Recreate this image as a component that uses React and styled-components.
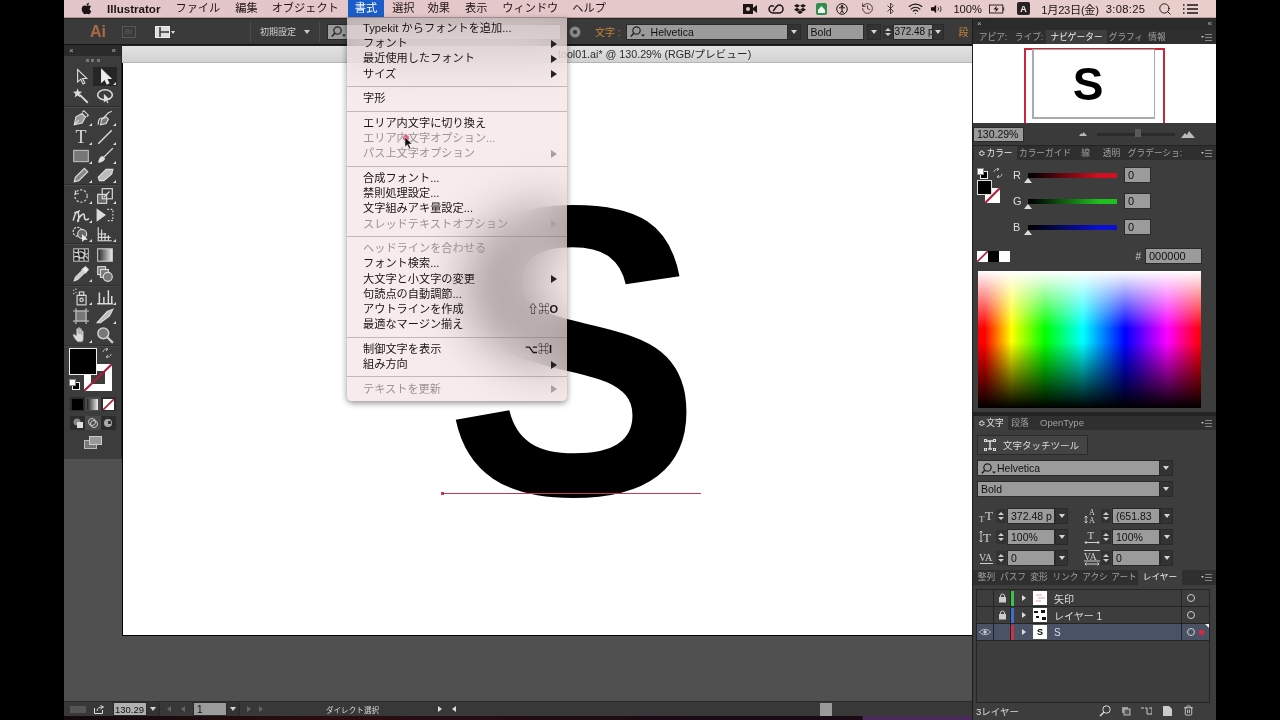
import React from 'react';
import styled, { createGlobalStyle } from 'styled-components';
import { FaApple, FaDropbox } from 'react-icons/fa';
import { Bluetooth, History, Search, Trash2, Wifi } from 'lucide-react';

const UI_FONT = '"Liberation Sans", "Noto Sans CJK JP", sans-serif';

const GlobalStyle = createGlobalStyle`
  html, body { margin: 0; padding: 0; background: #000; height: 720px; overflow: hidden; }
  * { box-sizing: border-box; }
`;

const Screen = styled.div`
  position: relative;
  width: 1152px;
  height: 720px;
  margin-left: 64px;
  display: flex;
  flex-direction: column;
  overflow: hidden;
  font-family: ${UI_FONT};
`;

const Gapped = styled.svg`
  flex: none;
  margin-left: ${(p) => p.$l || 0}px;
  margin-right: ${(p) => p.$r || 0}px;
`;

/* ---------- mac menu bar ---------- */
const MenuBar = styled.div`
  height: 18px;
  flex: none;
  display: flex;
  align-items: center;
  background: linear-gradient(90deg, #e2c5c8, #e5c8ca 50%, #e8cfcc);
  border-bottom: 1px solid #b79a9c;
  color: #1c1414;
  font-size: 11.2px;
  position: relative;
`;
const AppleMark = styled.span`
  display: flex;
  margin-left: 16px;
  width: 20px;
  font-size: 13px;
`;
const MenuName = styled.span`
  padding: 0 7px;
  margin-right: ${(p) => p.$gap || 0}px;
  height: 17px;
  line-height: 17px;
  font-weight: ${(p) => (p.$bold ? 700 : 400)};
  font-size: ${(p) => (p.$bold ? '11.6px' : '11.2px')};
  background: ${(p) => (p.$open ? '#1b5dc8' : 'transparent')};
  color: ${(p) => (p.$open ? '#fff' : 'inherit')};
`;
const StatusArea = styled.div`
  margin-left: auto;
  display: flex;
  align-items: center;
  height: 17px;
  padding-right: 15px;
`;
const StatusSlot = styled.span`
  display: flex;
  justify-content: ${(p) => (p.$end ? 'flex-end' : 'center')};
  align-items: center;
  width: ${(p) => p.$w}px;
  padding-right: ${(p) => (p.$end ? 5 : 0)}px;
  white-space: nowrap;
  letter-spacing: ${(p) => p.$ls || 0}px;
`;
const InputBadge = styled.span`
  width: 13px;
  height: 13px;
  background: #2a2024;
  color: #eee;
  font-size: 9px;
  font-weight: 700;
  border-radius: 2px;
  display: flex;
  align-items: center;
  justify-content: center;
`;

/* ---------- app frame ---------- */
const Workspace = styled.div`
  flex: 1;
  display: flex;
  min-height: 0;
`;
const MainColumn = styled.div`
  flex: 1;
  min-width: 0;
  display: flex;
  flex-direction: column;
`;

/* ---------- control bar ---------- */
const ControlBar = styled.div`
  height: 27px;
  flex: none;
  display: flex;
  align-items: center;
  background: #3a3a3a;
  border-bottom: 1px solid #151515;
  border-top: 1px solid #262626;
  color: #cfcfcf;
  font-size: 9px;
  white-space: nowrap;
  overflow: hidden;
`;
const AppLogo = styled.span`
  color: #a96a45;
  font-weight: 700;
  font-size: 16px;
  margin-left: 26px;
  width: 32px;
`;
const BridgeBox = styled.span`
  width: 14px;
  height: 12px;
  border: 1px solid #565656;
  color: #5f5f5f;
  font-size: 8px;
  line-height: 10px;
  text-align: center;
  margin-right: 19px;
`;
const BarDivider = styled.span`
  width: 1px;
  height: 20px;
  background: #4c4c4c;
  margin: 0 ${(p) => p.$r || 0}px 0 ${(p) => p.$l || 0}px;
`;
const OrangeLabel = styled.span`
  color: #c98538;
  font-size: 10px;
  margin: 0 ${(p) => p.$r || 0}px 0 ${(p) => p.$l || 0}px;
`;
const Field = styled.span`
  display: flex;
  align-items: center;
  flex: none;
  width: ${(p) => p.$w}px;
  height: ${(p) => p.$h || 14}px;
  background: ${(p) => p.$bg || '#9b9b9b'};
  color: #111;
  font-size: ${(p) => p.$size || 11}px;
  padding-left: ${(p) => (p.$tight ? 1 : 3)}px;
  margin-left: ${(p) => p.$l || 0}px;
  white-space: nowrap;
  overflow: hidden;
  box-shadow: 0 0 0 1px #2a2a2a;
`;
const DropButton = styled.span`
  flex: none;
  width: ${(p) => p.$w || 12}px;
  height: 14px;
  margin-left: ${(p) => (p.$l === undefined ? 1 : p.$l)}px;
  background: #333;
  box-shadow: 0 0 0 1px #2a2a2a;
  display: flex;
  align-items: center;
  justify-content: center;
  &::after {
    content: '';
    border-left: 3px solid transparent;
    border-right: 3px solid transparent;
    border-top: 4px solid #d5d5d5;
  }
`;
const Spinner = styled.span`
  flex: none;
  width: 10px;
  height: 14px;
  background: #333;
  display: flex;
  flex-direction: column;
  align-items: center;
  justify-content: center;
  gap: 2px;
  margin-left: ${(p) => p.$l || 0}px;
  &::before, &::after {
    content: '';
    border-left: 3px solid transparent;
    border-right: 3px solid transparent;
  }
  &::before { border-bottom: 3px solid #ccc; }
  &::after { border-top: 3px solid #ccc; }
`;

/* ---------- document area ---------- */
const DocBody = styled.div`
  flex: 1;
  min-height: 0;
  display: flex;
  background: #505050;
`;
const ToolColumn = styled.div`
  width: 58px;
  flex: none;
  align-self: flex-start;
  height: 414px;
  background: #3c3c3c;
  border-right: 1px solid #222;
  display: flex;
  flex-direction: column;
`;
const ToolHeader = styled.div`
  height: 11px;
  background: #2b2b2b;
  color: #bbb;
  font-size: 8px;
  line-height: 11px;
  display: flex;
  justify-content: space-between;
  padding: 0 5px;
`;
const Grip = styled.div`
  height: 7px;
  margin: 3px auto 0;
  width: 14px;
  border-top: 3px dotted #777;
`;
const ToolGroup = styled.div`
  display: grid;
  grid-template-columns: 24px 24px;
  justify-content: center;
  grid-auto-rows: 19px;
  padding: 1px 0 ${(p) => p.$pad}px;
  border-bottom: 1px solid #2f2f2f;
  box-shadow: 0 1px 0 #484848;
`;
const ToolButton = styled.span`
  position: relative;
  display: flex;
  align-items: center;
  justify-content: center;
  background: ${(p) => (p.$active ? '#262626' : 'transparent')};
  &::after {
    content: '';
    display: ${(p) => (p.$corner ? 'block' : 'none')};
    position: absolute;
    right: 1px;
    bottom: 1px;
    border-left: 3px solid transparent;
    border-bottom: 3px solid #ddd;
  }
`;
const ColorBlock = styled.div`
  position: relative;
  height: 44px;
  margin-top: 2px;
  flex: none;
`;
const FillBox = styled.span`
  position: absolute;
  left: 5px;
  top: 0;
  width: 28px;
  height: 27px;
  background: #000;
  border: 1px solid #eee;
  z-index: 1;
`;
const StrokeBox = styled.span`
  position: absolute;
  left: 20px;
  top: 16px;
  width: 28px;
  height: 27px;
`;
const SwapMark = styled.span`
  position: absolute;
  left: ${(p) => p.$l}px;
  top: ${(p) => p.$t}px;
  display: flex;
`;
const DefaultMark = styled.span`
  position: absolute;
  left: ${(p) => p.$l}px;
  top: ${(p) => p.$t}px;
  display: flex;
`;
const ModeRow = styled.div`
  display: flex;
  width: 46px;
  height: 14px;
  margin: 5px 0 0 6px;
  background: #2c2c2c;
  flex: none;
`;
const ModeCell = styled.span`
  flex: 1;
  display: flex;
  align-items: center;
  justify-content: center;
  background: ${(p) => (p.$on ? '#4a4a4a' : 'transparent')};
`;
const ScreenMode = styled.div`
  display: flex;
  justify-content: center;
  margin-top: 6px;
`;

const CanvasColumn = styled.div`
  flex: 1;
  min-width: 0;
  display: flex;
  flex-direction: column;
`;
const DocTab = styled.div`
  height: 18px;
  flex: none;
  background: linear-gradient(#e2e2e2, #d2d2d2);
  border-top: 1px solid #202020;
  border-bottom: 1px solid #b5b5b5;
  color: #2b2b2b;
  font-size: 10.7px;
  line-height: 16px;
  padding-left: 436px;
  white-space: nowrap;
  overflow: hidden;
`;
const Artboard = styled.div`
  position: relative;
  height: 573px;
  flex: none;
  background: #fff;
  border-bottom: 1px solid #000;
  border-left: 1px solid #000;
  overflow: hidden;
`;
const BigLetter = styled.span`
  position: absolute;
  left: 312px;
  top: 81px;
  font-family: "Liberation Sans", sans-serif;
  font-weight: 700;
  font-size: 414px;
  line-height: 1;
  color: #000;
  transform: scaleX(0.93);
`;
const BaseLine = styled.span`
  position: absolute;
  left: 318px;
  top: 430px;
  width: 260px;
  height: 1px;
  background: #c8384f;
  &::before {
    content: '';
    position: absolute;
    left: 0;
    top: -1px;
    width: 3px;
    height: 3px;
    background: #c8384f;
  }
`;

/* ---------- status bar ---------- */
const StatusBar = styled.div`
  height: 15px;
  flex: none;
  display: flex;
  align-items: center;
  background: #383838;
  border-top: 1px solid #2a2a2a;
  color: #d5d5d5;
  font-size: 7.6px;
  padding-left: 6px;
`;
const StatusLabel = styled.span`
  width: 165px;
  text-align: center;
  margin-left: 7px;
  flex: none;
`;
const Arrow = styled.span`
  flex: none;
  margin: 0 ${(p) => p.$r || 0}px 0 ${(p) => p.$l || 0}px;
  border-top: 3px solid transparent;
  border-bottom: 3px solid transparent;
  ${(p) => (p.$left
    ? `border-right: 4px solid ${p.$c || '#666'};`
    : `border-left: 4px solid ${p.$c || '#666'};`)}
`;
const ScrollThumb = styled.span`
  width: 12px;
  height: 13px;
  background: #9a9a9a;
  flex: none;
  margin-left: 364px;
`;
const Wallpaper = styled.div`
  height: 4px;
  flex: none;
  background: linear-gradient(90deg, #140a0c 0, #2a0d12 30%, #1a0a14 70%, #1a0a14 87.900%, #4a2a58 88%, #4a2a58 100%);
`;

/* ---------- dock ---------- */
const Dock = styled.div`
  width: 244px;
  flex: none;
  background: #3c3c3c;
  border-left: 1px solid #1c1c1c;
  display: flex;
  flex-direction: column;
`;
const DockHeader = styled.div`
  height: 12px;
  flex: none;
  background: #2b2b2b;
  color: #bbb;
  font-size: 8px;
  line-height: 12px;
  display: flex;
  justify-content: space-between;
  padding: 0 4px;
`;
const TabStrip = styled.div`
  height: ${(p) => p.$h || 14}px;
  flex: none;
  display: flex;
  align-items: stretch;
  background: #2f2f2f;
  padding-left: 1px;
  position: relative;
`;
const Tab = styled.span`
  flex: none;
  width: ${(p) => p.$w}px;
  overflow: hidden;
  white-space: nowrap;
  font-size: ${(p) => p.$size || 8.7}px;
  line-height: ${(p) => p.$lh || 14}px;
  text-align: center;
  color: ${(p) => (p.$active ? '#eee' : '#a0a0a0')};
  background: ${(p) => (p.$active ? '#3e3e3e' : 'transparent')};
`;
const TabMenu = styled.span`
  position: absolute;
  right: 4px;
  top: 4px;
  display: flex;
`;
const NavPreview = styled.div`
  height: 79px;
  flex: none;
  background: #fff;
  position: relative;
  overflow: hidden;
`;
const NavSheet = styled.span`
  position: absolute;
  left: 59px;
  top: 5px;
  width: 123px;
  height: 70px;
  border: 1px solid #aaa;
  border-width: 1px 1px 2px 2px;
  padding-right: 12px;
  text-align: center;
  font-family: "Liberation Sans", sans-serif;
  font-weight: 700;
  font-size: 46px;
  line-height: 68px;
  color: #000;
`;
const NavRect = styled.span`
  position: absolute;
  left: 51px;
  top: 4px;
  width: 141px;
  height: 90px;
  border: 2px solid #c8283c;
`;
const NavBar = styled.div`
  height: 23px;
  flex: none;
  display: flex;
  align-items: center;
  padding: 0 4px 0 1px;
  background: #3a3a3a;
  border-bottom: 1px solid #222;
`;
const NavTrack = styled.span`
  position: relative;
  width: 78px;
  height: 3px;
  margin: 0 6px 0 10px;
  background: #2b2b2b;
  &::after {
    content: '';
    position: absolute;
    left: 38px;
    top: -4px;
    width: 6px;
    height: 8px;
    background: #5a5a5a;
  }
`;
const ColorPanel = styled.div`
  height: 252px;
  flex: none;
  position: relative;
  display: flex;
  flex-direction: column;
  padding: 8px 15px 0 4px;
  background: #3d3d3d;
`;
const ColorTop = styled.div`
  display: flex;
  height: 78px;
`;
const MiniColor = styled.div`
  position: relative;
  width: 36px;
  flex: none;
`;
const MiniFill = styled.span`
  position: absolute;
  left: 0;
  top: 12px;
  width: 15px;
  height: 15px;
  background: #000;
  border: 1px solid #ddd;
  z-index: 1;
`;
const MiniStroke = styled.span`
  position: absolute;
  left: 8px;
  top: 20px;
  display: flex;
`;
const Sliders = styled.div`
  flex: 1;
  display: flex;
  flex-direction: column;
  gap: 12px;
`;
const SliderRow = styled.div`
  display: flex;
  align-items: center;
  height: 14px;
  color: #ddd;
  font-size: 11px;
`;
const ChannelName = styled.span`
  width: 15px;
  flex: none;
`;
const ChannelTrack = styled.span`
  position: relative;
  width: 89px;
  height: 5px;
  flex: none;
  background: linear-gradient(90deg, #000 3%, ${(p) => p.$c} 80%);
  &::after {
    content: '';
    position: absolute;
    left: -4px;
    top: 5px;
    border-left: 4px solid transparent;
    border-right: 4px solid transparent;
    border-bottom: 5px solid #ddd;
  }
`;
const SwatchRow = styled.div`
  display: flex;
  align-items: center;
  height: 14px;
  margin-top: 3px;
`;
const Swatch = styled.span`
  width: 11px;
  height: 11px;
  background: ${(p) => p.$c};
  display: flex;
`;
const HashMark = styled.span`
  margin-left: auto;
  color: #ccc;
  font-size: 10px;
  margin-right: 5px;
`;
const Spectrum = styled.div`
  width: 223px;
  height: 137px;
  margin: 8px 0 0 1px;
  background:
    linear-gradient(180deg, #fff 0%, rgba(255,255,255,0) 42%, rgba(0,0,0,0) 52%, #000 100%),
    linear-gradient(90deg, #f00 3%, #ff0 15%, #0f0 30%, #0ff 47%, #00f 66%, #f0f 85%, #f00 100%);
`;
const PanelGap = styled.div`
  height: 4px;
  flex: none;
  background: #222;
`;
const TypePanel = styled.div`
  height: 140px;
  flex: none;
  padding: 6px 0 0 5px;
  background: #3d3d3d;
  display: flex;
  flex-direction: column;
`;
const TouchButton = styled.span`
  width: 109px;
  height: 18px;
  display: flex;
  align-items: center;
  gap: 7px;
  padding-left: 6px;
  background: #444;
  box-shadow: 0 0 0 1px #2a2a2a;
  color: #ddd;
  font-size: 9.5px;
`;
const TypeRow = styled.div`
  display: flex;
  align-items: center;
  height: 14px;
  margin-top: ${(p) => p.$mt || 0}px;
`;
const MetricRow = styled.div`
  display: grid;
  grid-template-columns: 105px 1fr;
  height: 14px;
  margin-top: ${(p) => p.$mt || 7}px;
`;
const Metric = styled.div`
  display: flex;
  align-items: center;
`;
const MetricIcon = styled.span`
  width: 18px;
  flex: none;
  display: flex;
  justify-content: center;
`;
const LayersPanel = styled.div`
  flex: 1;
  display: flex;
  flex-direction: column;
  background: #3d3d3d;
  min-height: 0;
`;
const LayerList = styled.div`
  height: 114px;
  flex: none;
  margin: 4px 6px 0 3px;
  border: 1px solid #252525;
  background: #3d3d3d;
`;
const LayerRow = styled.div`
  position: relative;
  height: 17px;
  display: grid;
  grid-template-columns: 17px 17px 5px 17px 16px 1fr 28px;
  align-items: center;
  background: ${(p) => (p.$selected ? '#4a5366' : 'transparent')};
  border-bottom: 1px solid #252525;
  color: #ddd;
  font-size: 10px;
  &::after {
    content: '';
    display: ${(p) => (p.$selected ? 'block' : 'none')};
    position: absolute;
    right: 0;
    top: 0;
    border-left: 4px solid transparent;
    border-top: 4px solid #eee;
  }
`;
const EyeCell = styled.span`
  height: 16px;
  display: flex;
  align-items: center;
  justify-content: center;
  border-right: 1px solid #252525;
`;
const ColorBar = styled.span`
  height: 15px;
  width: 3px;
  background: ${(p) => p.$c};
`;
const Thumb = styled.span`
  display: flex;
  align-items: center;
  justify-content: center;
  width: 14px;
  height: 14px;
  background: #fff;
  color: #000;
  font-size: 9px;
  font-weight: 700;
  line-height: 14px;
  text-align: center;
  overflow: hidden;
`;
const LayerName = styled.span`
  padding-left: 5px;
`;
const TargetCell = styled.span`
  position: relative;
  height: 16px;
  display: flex;
  align-items: center;
  padding-left: 5px;
  gap: 4px;
  border-left: 1px solid #252525;
`;
const Target = styled.span`
  width: 8px;
  height: 8px;
  border-radius: 50%;
  border: 1px solid #ccc;
`;
const SelMark = styled.span`
  width: 5px;
  height: 5px;
  background: #d02a40;
`;
const LayerFoot = styled.div`
  height: 15px;
  display: flex;
  align-items: center;
  color: #ddd;
  font-size: 9.5px;
  padding-left: 3px;
`;
const FootSlot = styled.span`
  width: 21px;
  display: flex;
  justify-content: center;
  margin-left: ${(p) => p.$l || 0}px;
`;

/* ---------- dropdown menu ---------- */
const Menu = styled.div`
  position: absolute;
  left: 283px;
  top: 18px;
  width: 220px;
  height: 383px;
  padding-top: 3px;
  border-radius: 0 0 5px 5px;
  background: rgba(243, 225, 227, 0.68);
  backdrop-filter: blur(26px) saturate(1.1);
  box-shadow: 0 2px 6px rgba(0, 0, 0, 0.45);
  color: #1a1416;
  font-size: 11.2px;
  z-index: 5;
`;
const MenuRow = styled.div`
  height: 15.2px;
  line-height: 15.2px;
  display: flex;
  align-items: center;
  padding: 0 9px 0 16px;
  white-space: nowrap;
  color: ${(p) => (p.$off ? '#9b9295' : 'inherit')};
`;
const Shortcut = styled.span`
  margin-left: auto;
  padding-right: ${(p) => p.$pr}px;
  font-size: 11px;
  font-weight: 700;
  color: inherit;
`;
const SubArrow = styled.span`
  margin-left: auto;
  margin-right: 1px;
  border-top: 4px solid transparent;
  border-bottom: 4px solid transparent;
  border-left: 6px solid ${(p) => (p.$off ? '#a9a0a3' : '#222')};
`;
const MenuRule = styled.div`
  height: 1px;
  margin: 4.3px 0 4.2px;
  background: rgba(120, 105, 108, 0.4);
`;
const Pointer = styled.span`
  position: absolute;
  left: 339px;
  top: 134px;
  z-index: 6;
  display: flex;
`;

/* ---------- small drawings ---------- */
const paths = {
  select: <path d="M5 1.500v11l2.800-2.600 2 4.300 1.600-.8-2-4.100h3.700z" fill="none" stroke="#ddd" />,
  direct: <path d="M5 1.500v11l2.800-2.600 2 4.300 1.600-.8-2-4.100h3.700z" fill="#eee" stroke="#eee" />,
  wand: <g stroke="#ddd" fill="#ddd"><path d="M7 7l7 7" strokeWidth="1.600" /><path d="M5 1l1 3 3 .3-2.300 2 .8 3-2.600-1.700-2.600 1.700.8-3L1 4.300 4 4z" stroke="none" /></g>,
  lasso: <g fill="none" stroke="#ddd"><ellipse cx="8" cy="7" rx="6.500" ry="4.500" strokeWidth="1.400" /><path d="M7 6v8l2-2 1 2.500 1-.5-1-2.500h2.500z" fill="#ddd" stroke="none" /></g>,
  pen: <g fill="none" stroke="#ddd"><path d="M2 14l1.500-7 5.500-3 3 3-3 5.500z" fill="#999" /><path d="M2 14l4-4M9 3l1.500-1.500 4 4L13 7" /></g>,
  curve: <g fill="none" stroke="#ddd"><path d="M2 14c0-6 2-6 4-6s3-5 8-6" /><path d="M4 14l1-5 4-2 2 2-2 4z" fill="#777" /></g>,
  type: <text x="8" y="13.500" textAnchor="middle" fontFamily="Liberation Serif" fontSize="16" fill="#ddd">T</text>,
  line: <path d="M2 14L14 2" stroke="#ddd" strokeWidth="1.200" />,
  rect: <rect x="1.500" y="3" width="13" height="10" fill="#777" stroke="#bbb" />,
  brush: <g stroke="#ddd" fill="#ddd"><path d="M7 9L15 1" strokeWidth="1.200" /><path d="M2 14c0-3 2-6 4-6l2 2c0 2-3 4-6 4z" stroke="none" /></g>,
  pencil: <path d="M2 14l1-4 8-8 3 3-8 8z" fill="#888" stroke="#ddd" />,
  eraser: <path d="M2 10l7-7h6l-1 4-7 6H3z" fill="#bbb" stroke="#ddd" />,
  rotate: <g fill="none" stroke="#ddd"><circle cx="8" cy="8" r="5.500" strokeDasharray="2 1.500" /><path d="M3 3v3h3" /></g>,
  scale: <g fill="none" stroke="#ddd"><rect x="1.500" y="6.500" width="8" height="8" fill="#666" /><rect x="5.500" y="1.500" width="9" height="9" /><path d="M7 9l5-5" /></g>,
  warp: <g fill="none" stroke="#ddd" strokeWidth="1.300"><path d="M1 13c3-11 5-9 5-3s-2 4 0 1 5-6 5-2 2 4 4 2" /><path d="M2 6c2 0 3 0 5-2" /></g>,
  free: <g fill="#ddd" stroke="#ddd"><path d="M1 3l7 5-7 5z" /><path d="M10 3h5v10h-5" fill="none" strokeDasharray="1.500 1.500" /></g>,
  shape: <g fill="none" stroke="#ddd"><circle cx="5" cy="6" r="4" strokeDasharray="2 1" /><circle cx="9" cy="8" r="4" fill="#666" /><path d="M9 8v7l2-2h3z" fill="#eee" stroke="none" /></g>,
  graph: <g stroke="#ddd" fill="none"><path d="M2 2v12h12" /><path d="M5 4v10M8 7v7M11 9v5M2 8h7M2 11h11" /></g>,
  mesh: <g><rect x="1.500" y="2.500" width="13" height="11" fill="#222" stroke="#bbb" /><path d="M2 5c3 3 5-2 8 1s3 0 4 1M2 10c3-3 5 3 8 0s3 1 4 1M6 3c-2 3 2 6 0 10M11 3c2 3-2 6 0 10" stroke="#ddd" fill="none" /></g>,
  gradient: <g><defs><linearGradient id="toolGrad"><stop offset="0" stopColor="#222" /><stop offset="1" stopColor="#eee" /></linearGradient></defs><rect x="1.500" y="2.500" width="13" height="11" fill="url(#toolGrad)" stroke="#ccc" /></g>,
  dropper: <g stroke="#ddd" fill="#ccc"><path d="M2 14l1-3 6-6 2 2-6 6z" /><path d="M9 4l3-2.500 2.500 2.500L12 7z" fill="#eee" /></g>,
  blend: <g fill="#777" stroke="#ddd"><rect x="1.500" y="1.500" width="7" height="7" /><rect x="4" y="4" width="7" height="7" /><circle cx="10.500" cy="10.500" r="4" /></g>,
  spray: <g stroke="#ddd" fill="none"><rect x="4.500" y="6.500" width="8" height="8.500" fill="#444" /><rect x="6.500" y="3.500" width="4" height="3" /><circle cx="8.500" cy="10.500" r="1.500" /><path d="M1 2h1M3 4h1M1 5h1M3 1h1" /></g>,
  bars: <g fill="none" stroke="#ddd" strokeWidth="1.300"><path d="M1 14h14M3 14V4M7 14V8M11 14V2M14 14V7" /></g>,
  artboard: <g fill="#777" stroke="#ccc"><rect x="3.500" y="3.500" width="9" height="9" /><path d="M1 3.500h2M13 3.500h2M1 12.500h2M13 12.500h2M3.500 1v2M12.500 1v2M3.500 13v2M12.500 13v2" /></g>,
  slice: <path d="M1 14L10 4l5-2-3 6-8 6z" fill="#bbb" stroke="#ddd" />,
  hand: <path d="M5 14c-2-2-4-5-4-6s1-1 2 0l1 1V3c0-1 1.500-1 1.500 0v4V2c0-1 1.500-1 1.500 0v5V3c0-1 1.500-1 1.500 0v5-3c0-1 1.500-1 1.500 0v6c0 2-1 3-1 3z" fill="#ddd" stroke="#999" strokeWidth=".5" />,
  zoom: <g fill="none" stroke="#ccc"><circle cx="6.500" cy="6.500" r="4.800" fill="#777" strokeWidth="1.400" /><path d="M10 10l5 5" strokeWidth="2" /></g>,
};

const ToolIcon = ({ name }) => (
  <svg width="18" height="18" viewBox="0 0 16 16">{paths[name]}</svg>
);

const toolGroups = [
  { pad: 1, items: [['select', 0], ['direct', 1], ['wand', 0], ['lasso', 0]] },
  { pad: 0, items: [['pen', 1], ['curve', 1], ['type', 1], ['line', 1], ['rect', 1], ['brush', 1], ['pencil', 1], ['eraser', 1]] },
  { pad: 0, items: [['rotate', 1], ['scale', 1], ['warp', 1], ['free', 0], ['shape', 1], ['graph', 1]] },
  { pad: 2, items: [['mesh', 0], ['gradient', 0], ['dropper', 1], ['blend', 0]] },
  { pad: 1, items: [['spray', 1], ['bars', 1], ['artboard', 0], ['slice', 1], ['hand', 1], ['zoom', 0]] },
];

const NoneSwatch = ({ size, bg = '#fff' }) => (
  <svg width={size} height={size} viewBox="0 0 20 20">
    <rect width="20" height="20" fill={bg} />
    <path d="M0 20L20 0" stroke="#b5213a" strokeWidth="3" />
  </svg>
);

const PanelMenuIcon = () => (
  <svg width="11" height="7" viewBox="0 0 11 7">
    <path d="M0 2h3L1.500 4z" fill="#bbb" />
    <path d="M4 .5h7M4 3.500h7M4 6.500h7" stroke="#888" />
  </svg>
);

const Mountain = ({ w, h }) => (
  <svg width={w} height={h} viewBox="0 0 14 7"><path d="M0 7l4-5 2 2 2-4 6 7z" fill="#bbb" /></svg>
);

const Lock = () => (
  <svg width="9" height="10" viewBox="0 0 9 10">
    <path d="M2.500 4V3a2 2 0 0 1 4 0v1" fill="none" stroke="#ccc" />
    <rect x="1" y="4" width="7" height="5.500" fill="#ccc" />
  </svg>
);

const Eye = () => (
  <svg width="12" height="8" viewBox="0 0 12 8">
    <path d="M.5 4C3 .5 9 .5 11.500 4 9 7.500 3 7.500.5 4z" fill="none" stroke="#bbb" />
    <circle cx="6" cy="4" r="1.800" fill="#ccc" />
  </svg>
);

// magnifier with the handle on the left and a little menu arrow, as in the font fields
const FindIcon = ({ r = 6, color = '#222' }) => (
  <Gapped $r={r} width="15" height="11" viewBox="0 0 15 11" fill="none" stroke={color}>
    <circle cx="6.500" cy="4.500" r="3.700" strokeWidth="1.200" />
    <path d="M3.800 7.200L.8 10.400" strokeWidth="1.500" />
    <path d="M11 8.500h4l-2 2.200z" fill={color} stroke="none" />
  </Gapped>
);

const SwapIcon = () => (
  <svg width="10" height="10" viewBox="0 0 10 10" fill="none" stroke="#bbb"><path d="M1 4c0-2 2-3 4-3M4 0L6 1 4 3M9 6c0 2-2 3-4 3M6 10L4 9l2-2" /></svg>
);

const DefaultIcon = () => (
  <svg width="11" height="11" viewBox="0 0 11 11"><rect x="3.500" y="3.500" width="7" height="7" fill="#000" stroke="#eee" /><rect x=".5" y=".5" width="6" height="6" fill="#fff" stroke="#888" /></svg>
);

const serif = { fontFamily: 'Liberation Serif', fill: '#cfcfcf' };
const metricGlyphs = {
  size: <><text x="0" y="14" fontSize="9" {...serif}>T</text><text x="6" y="12" fontSize="13" {...serif}>T</text></>,
  leading: <><text x="5" y="7" fontSize="8" {...serif}>A</text><text x="5" y="15" fontSize="8" {...serif}>A</text><path d="M2 8v7M.5 9.500L2 8l1.500 1.500M.5 13.500L2 15l1.500-1.500" stroke="#cfcfcf" fill="none" /></>,
  vscale: <><path d="M2 2v11M.5 3.500L2 2l1.500 1.500M.5 11.500L2 13l1.500-1.500" stroke="#cfcfcf" fill="none" /><text x="4" y="13" fontSize="13" {...serif}>T</text></>,
  hscale: <><text x="3.500" y="10" fontSize="11" {...serif}>T</text><path d="M1 13.500h14M2.500 12L1 13.500 2.500 15M13.500 12L15 13.500 13.500 15" stroke="#cfcfcf" fill="none" /></>,
  kern: <><text x="0" y="11" fontSize="10" {...serif}>VA</text><path d="M1 13.500h13" stroke="#cfcfcf" fill="none" /></>,
  track: <><path d="M0 .5h16M0 11h16" stroke="#cfcfcf" /><text x="0" y="9.500" fontSize="9.500" {...serif}>VA</text><path d="M1 14h14M2.500 12.500L1 14l1.500 1.500M13.500 12.500L15 14l-1.500 1.500" stroke="#cfcfcf" fill="none" /></>,
};

const MetricGlyph = ({ name }) => (
  <MetricIcon>
    <svg width="16" height="16" viewBox="0 0 16 16">{metricGlyphs[name]}</svg>
  </MetricIcon>
);

const metrics = [
  [['size', '372.48 p'], ['leading', '(651.83']],
  [['vscale', '100%'], ['hscale', '100%']],
  [['kern', '0'], ['track', '0']],
];

const StatusIcons = () => (
  <>
    <StatusSlot $w={26}>
      <svg width="14" height="10" viewBox="0 0 14 10"><rect width="10" height="10" fill="#1c1414" /><circle cx="5" cy="5" r="2" fill="#e3c4c6" /><path d="M10 4l4-3v8l-4-3z" fill="#1c1414" /></svg>
    </StatusSlot>
    <StatusSlot $w={26}>
      <svg width="16" height="10" viewBox="0 0 16 10" fill="none" stroke="#1c1414" strokeWidth="1.500"><path d="M6 2.500C3 .5 1 3 1 5s2 4 4 4h6c2 0 4-1.500 4-4s-2-4-4-4c-3 0-4 5-6 6" /></svg>
    </StatusSlot>
    <StatusSlot $w={22}><FaDropbox size={12} /></StatusSlot>
    <StatusSlot $w={20}>
      <svg width="11" height="12" viewBox="0 0 11 12"><rect width="11" height="12" rx="2" fill="#2f8f4c" /><path d="M2 7l3.500-4L9 7v3H2z" fill="#f2f2f2" /></svg>
    </StatusSlot>
    <StatusSlot $w={22}>
      <svg width="12" height="12" viewBox="0 0 12 12" fill="none" stroke="#1c1414"><circle cx="6" cy="6" r="5.300" /><circle cx="6" cy="3.200" r=".8" fill="#1c1414" /><path d="M3 4.800h6M6 4.800v2.500M6 7.300L4.500 10M6 7.300L7.500 10" /></svg>
    </StatusSlot>
    <StatusSlot $w={28}><History size={13} strokeWidth={1.400} /></StatusSlot>
    <StatusSlot $w={18}><Bluetooth size={13} strokeWidth={1.400} /></StatusSlot>
    <StatusSlot $w={32}><Wifi size={15} strokeWidth={1.800} /></StatusSlot>
    <StatusSlot $w={12}>
      <svg width="14" height="10" viewBox="0 0 14 10" fill="none" stroke="#1c1414"><path d="M0 3h3l3-3v10L3 7H0z" fill="#1c1414" stroke="none" /><path d="M8 3c1 1 1 3 0 4M10.500 1.500c1.500 2 1.500 5 0 7" /></svg>
    </StatusSlot>
    <StatusSlot $w={44} $end>100%</StatusSlot>
    <StatusSlot $w={20}>
      <svg width="16" height="10" viewBox="0 0 18 10" fill="none" stroke="#1c1414"><rect x=".5" y=".5" width="15" height="9" /><path d="M16.500 3v4" /><path d="M9 1L5 5.500h3L7 9l4-4.500H8z" fill="#1c1414" stroke="none" /></svg>
    </StatusSlot>
    <StatusSlot $w={33}><InputBadge>A</InputBadge></StatusSlot>
    <StatusSlot $w={60} $ls={-0.3}>1月23日(金)</StatusSlot>
    <StatusSlot $w={51} $ls={0.3}>3:08:25</StatusSlot>
    <StatusSlot $w={28}><Search size={14} strokeWidth={1.600} /></StatusSlot>
    <StatusSlot $w={22}>
      <svg width="15" height="10" viewBox="0 0 15 10" stroke="#1c1414" strokeWidth="1.300"><path d="M0 1h1.500M0 5h1.500M0 9h1.500M4 1h11M4 5h11M4 9h11" /></svg>
    </StatusSlot>
  </>
);

const menuSections = [
  [['Typekit からフォントを追加...'], ['フォント', 'sub'], ['最近使用したフォント', 'sub'], ['サイズ', 'sub']],
  [['字形']],
  [['エリア内文字に切り換え'], ['エリア内文字オプション...', 'off'], ['パス上文字オプション', 'offsub']],
  [['合成フォント...'], ['禁則処理設定...'], ['文字組みアキ量設定...'], ['スレッドテキストオプション', 'offsub']],
  [['ヘッドラインを合わせる', 'off'], ['フォント検索...'], ['大文字と小文字の変更', 'sub'], ['句読点の自動調節...'], ['アウトラインを作成', '⇧⌘O'], ['最適なマージン揃え']],
  [['制御文字を表示', '⌥⌘I'], ['組み方向', 'sub']],
  [['テキストを更新', 'offsub']],
];

const TypeMenu = () => (
  <Menu>
    {menuSections.map((section, i) => (
      <React.Fragment key={section[0][0]}>
        {i > 0 && <MenuRule />}
        {section.map(([label, kind]) => {
          const off = kind === 'off' || kind === 'offsub';
          const sub = kind === 'sub' || kind === 'offsub';
          return (
            <MenuRow key={label} $off={off}>
              {label}
              {sub && <SubArrow $off={off} />}
              {kind && kind.includes('⌘') && <Shortcut $pr={kind.includes('I') ? 6 : 0}>{kind}</Shortcut>}
            </MenuRow>
          );
        })}
      </React.Fragment>
    ))}
  </Menu>
);

const layers = [
  {
    name: '矢印',
    color: '#3fc24a',
    locked: true,
    thumb: <svg width="14" height="14" viewBox="0 0 14 14"><path d="M3 4h6M5 7h7M3 10h5" stroke="#e8c4cc" strokeWidth="1.500" /></svg>,
  },
  {
    name: 'レイヤー 1',
    color: '#3a6ec8',
    locked: true,
    thumb: <svg width="14" height="14" viewBox="0 0 14 14"><path d="M1 3h4v2H1zM8 2h4v3H8zM3 8h3v2H3zM9 9h4v3H9z" fill="#111" /></svg>,
  },
  { name: 'S', color: '#c8334a', visible: true, selected: true, thumb: 'S' },
];

const App = () => (
  <Screen>
    <GlobalStyle />
    <MenuBar>
      <AppleMark><FaApple /></AppleMark>
      <MenuName $bold $gap={1}>Illustrator</MenuName>
      <MenuName $gap={1}>ファイル</MenuName>
      <MenuName>編集</MenuName>
      <MenuName $gap={2}>オブジェクト</MenuName>
      <MenuName $open $gap={1}>書式</MenuName>
      <MenuName $gap={-1}>選択</MenuName>
      <MenuName $gap={1}>効果</MenuName>
      <MenuName $gap={1}>表示</MenuName>
      <MenuName>ウィンドウ</MenuName>
      <MenuName>ヘルプ</MenuName>
      <StatusArea><StatusIcons /></StatusArea>
    </MenuBar>

    <Workspace>
      <MainColumn>
        <ControlBar>
          <AppLogo>Ai</AppLogo>
          <BridgeBox>Br</BridgeBox>
          <svg width="20" height="12" viewBox="0 0 20 12">
            <rect x=".5" y=".5" width="14" height="11" fill="#ddd" stroke="#eee" />
            <path d="M5 1v10M5 6h9" stroke="#333" strokeWidth="1.500" />
            <path d="M16 5h4l-2 3z" fill="#ddd" />
          </svg>
          <BarDivider $l={75} $r={9} />
          <span>初期設定</span>
          <Gapped $l={8} width="6" height="4" viewBox="0 0 6 4"><path d="M0 0h6L3 4z" fill="#ccc" /></Gapped>
          <BarDivider $l={9} $r={8} />
          <Field $w={232} $size={10}>
            <FindIcon />
          </Field>
          <Gapped $l={9} width="12" height="12" viewBox="0 0 12 12">
            <circle cx="6" cy="6" r="5.500" fill="#888" />
            <circle cx="6" cy="6" r="2" fill="#333" />
          </Gapped>
          <OrangeLabel $l={14} $r={6}>文字 :</OrangeLabel>
          <Field $w={160} $size={10.500}>
            <FindIcon />Helvetica
          </Field>
          <DropButton />
          <Field $w={55} $l={8} $size={10.500}>Bold</Field>
          <DropButton $l={5} />
          <Spinner $l={3} />
          <Field $w={38} $l={1} $size={10} $tight>372.48 p</Field>
          <DropButton $w={10} />
          <OrangeLabel $l={16}>段</OrangeLabel>
        </ControlBar>

        <DocBody>
          <ToolColumn>
            <ToolHeader><span>×</span><span>«</span></ToolHeader>
            <Grip />
            {toolGroups.map((group) => (
              <ToolGroup key={group.items[0][0]} $pad={group.pad}>
                {group.items.map(([name, corner]) => (
                  <ToolButton key={name} $corner={!!corner} $active={name === 'direct'}>
                    <ToolIcon name={name} />
                  </ToolButton>
                ))}
              </ToolGroup>
            ))}
            <ColorBlock>
              <FillBox />
              <StrokeBox>
                <svg width="28" height="27" viewBox="0 0 28 27">
                  <path d="M0 0h28v27H0zM7 7v13h14V7z" fill="#fff" fillRule="evenodd" />
                  <path d="M0 27L28 0" stroke="#a81c38" strokeWidth="2" />
                </svg>
              </StrokeBox>
              <SwapMark $l={38} $t={0}><SwapIcon /></SwapMark>
              <DefaultMark $l={5} $t={31}><DefaultIcon /></DefaultMark>
            </ColorBlock>
            <ModeRow>
              <ModeCell><Swatch $c="#000" /></ModeCell>
              <ModeCell $on>
                <svg width="11" height="11"><defs><linearGradient id="modeGrad"><stop offset="0" stopColor="#222" /><stop offset="1" stopColor="#eee" /></linearGradient></defs><rect width="11" height="11" fill="url(#modeGrad)" /></svg>
              </ModeCell>
              <ModeCell><NoneSwatch size={11} /></ModeCell>
            </ModeRow>
            <ModeRow>
              <ModeCell>
                <svg width="10" height="10" viewBox="0 0 10 10"><circle cx="4" cy="4" r="3.500" fill="#888" /><rect x="4" y="4" width="6" height="6" fill="#ddd" /></svg>
              </ModeCell>
              <ModeCell $on>
                <svg width="10" height="10" viewBox="0 0 10 10" fill="none" stroke="#ccc"><circle cx="4" cy="4" r="3.500" /><circle cx="6" cy="6" r="3.500" /></svg>
              </ModeCell>
              <ModeCell>
                <svg width="10" height="10" viewBox="0 0 10 10"><circle cx="5" cy="5" r="4" fill="#aaa" /><rect x="5" y="3" width="3" height="3" fill="#333" /></svg>
              </ModeCell>
            </ModeRow>
            <ScreenMode>
              <svg width="18" height="13" viewBox="0 0 18 13"><rect x=".5" y="4.500" width="12" height="8" fill="#777" stroke="#bbb" /><rect x="5.500" y=".5" width="12" height="8" fill="#999" stroke="#ccc" /></svg>
            </ScreenMode>
          </ToolColumn>

          <CanvasColumn>
            <DocTab>tool01.ai* @ 130.29% (RGB/プレビュー)</DocTab>
            <Artboard>
              <BigLetter>S</BigLetter>
              <BaseLine />
            </Artboard>
          </CanvasColumn>
        </DocBody>

        <StatusBar>
          <svg width="16" height="7" viewBox="0 0 16 7"><rect width="16" height="7" fill="#555" /></svg>
          <Gapped $l={8} width="11" height="9" viewBox="0 0 11 9" fill="none" stroke="#ddd"><path d="M.5 3v5.500h8V5M3 6c0-3 3-4 5-4M6.500.5l3 1.500-3 2" /></Gapped>
          <Field $w={32} $h={12} $l={9} $bg="#b0b0b0" $size={9.500} $tight>130.29</Field>
          <DropButton $l={1} />
          <Arrow $left $l={8} $r={10} />
          <Arrow $left $r={9} />
          <Field $w={32} $h={12} $size={10}>1</Field>
          <DropButton $l={1} />
          <Arrow $l={8} $r={8} />
          <Arrow />
          <StatusLabel>ダイレクト選択</StatusLabel>
          <Arrow $c="#ddd" $l={3} $r={10} />
          <Arrow $left $c="#ddd" />
          <ScrollThumb />
        </StatusBar>
        <Wallpaper />
      </MainColumn>

      <Dock>
        <DockHeader><span>×</span><span>«</span></DockHeader>
        <TabStrip>
          <Tab $w={38}>アピア:</Tab>
          <Tab $w={34}>ライブ:</Tab>
          <Tab $w={61} $active>ナビゲーター</Tab>
          <Tab $w={38}>グラフィ</Tab>
          <Tab $w={24}>情報</Tab>
          <TabMenu><PanelMenuIcon /></TabMenu>
        </TabStrip>
        <NavPreview>
          <NavRect />
          <NavSheet>S</NavSheet>
        </NavPreview>
        <NavBar>
          <Field $w={49} $h={13} $size={10.500}>130.29%</Field>
          <Gapped $l={56} width="8" height="4" viewBox="0 0 14 7"><path d="M0 7l4-5 2 2 2-4 6 7z" fill="#bbb" /></Gapped>
          <NavTrack />
          <Mountain w={14} h={7} />
        </NavBar>
        <TabStrip>
          <Tab $w={43} $active>≎カラー</Tab>
          <Tab $w={56}>カラーガイド</Tab>
          <Tab $w={25}>線</Tab>
          <Tab $w={27}>透明</Tab>
          <Tab $w={60}>グラデーショ:</Tab>
          <TabMenu><PanelMenuIcon /></TabMenu>
        </TabStrip>
        <ColorPanel>
          <ColorTop>
            <MiniColor>
              <DefaultMark $l={0} $t={0}><DefaultIcon /></DefaultMark>
              <SwapMark $l={16} $t={0}><SwapIcon /></SwapMark>
              <MiniFill />
              <MiniStroke><NoneSwatch size={15} /></MiniStroke>
            </MiniColor>
            <Sliders>
              {[['R', '#d01020'], ['G', '#1fc020'], ['B', '#0a10d0']].map(([ch, c]) => (
                <SliderRow key={ch}>
                  <ChannelName>{ch}</ChannelName>
                  <ChannelTrack $c={c} />
                  <Field $w={25} $l={8}>0</Field>
                </SliderRow>
              ))}
            </Sliders>
          </ColorTop>
          <SwatchRow>
            <Swatch><NoneSwatch size={11} /></Swatch>
            <Swatch $c="#000" />
            <Swatch $c="#fff" />
            <HashMark>#</HashMark>
            <Field $w={55}>000000</Field>
          </SwatchRow>
          <Spectrum />
        </ColorPanel>
        <PanelGap />
        <TabStrip>
          <Tab $w={34} $active>≎文字</Tab>
          <Tab $w={24}>段落</Tab>
          <Tab $w={60} $size={9.500}>OpenType</Tab>
          <TabMenu><PanelMenuIcon /></TabMenu>
        </TabStrip>
        <TypePanel>
          <TouchButton>
            <svg width="12" height="12" viewBox="0 0 12 12" fill="none" stroke="#ddd"><path d="M2 2h8M6 2v8M4 10h4" strokeWidth="1.500" /><rect x=".5" y=".5" width="2" height="2" /><rect x="9.500" y=".5" width="2" height="2" /><rect x=".5" y="9.500" width="2" height="2" /><rect x="9.500" y="9.500" width="2" height="2" /></svg>
            文字タッチツール
          </TouchButton>
          <TypeRow $mt={7}>
            <Field $w={181} $size={10.500}><FindIcon r={1} />Helvetica</Field>
            <DropButton />
          </TypeRow>
          <TypeRow $mt={7}>
            <Field $w={181} $size={10.500}>Bold</Field>
            <DropButton />
          </TypeRow>
          {metrics.map((row, i) => (
            <MetricRow key={row[0][0]} $mt={i === 0 ? 12 : 7}>
              {row.map(([name, value]) => (
                <Metric key={name}>
                  <MetricGlyph name={name} />
                  <Spinner />
                  <Field $w={46} $l={2} $size={10.500}>{value}</Field>
                  <DropButton $w={11} $l={2} />
                </Metric>
              ))}
            </MetricRow>
          ))}
        </TypePanel>
        <TabStrip $h={15}>
          <Tab $w={25} $lh={15}>整列</Tab>
          <Tab $w={28} $lh={15}>パスフ</Tab>
          <Tab $w={24} $lh={15}>変形</Tab>
          <Tab $w={29} $lh={15}>リンク</Tab>
          <Tab $w={30} $lh={15}>アクシ</Tab>
          <Tab $w={28} $lh={15}>アート</Tab>
          <Tab $w={44} $lh={15} $active>レイヤー</Tab>
          <TabMenu><PanelMenuIcon /></TabMenu>
        </TabStrip>
        <LayersPanel>
          <LayerList>
            {layers.map((layer) => (
              <LayerRow key={layer.name} $selected={layer.selected}>
                <EyeCell>{layer.visible && <Eye />}</EyeCell>
                <EyeCell>{layer.locked && <Lock />}</EyeCell>
                <ColorBar $c={layer.color} />
                <Arrow $c="#ddd" $l={6} $r={7} />
                <Thumb>{layer.thumb}</Thumb>
                <LayerName>{layer.name}</LayerName>
                <TargetCell><Target />{layer.selected && <SelMark />}</TargetCell>
              </LayerRow>
            ))}
          </LayerList>
          <LayerFoot>
            <span>3レイヤー</span>
            <FootSlot $l={75}>
              <svg width="12" height="12" viewBox="0 0 12 12" fill="none" stroke="#ddd"><circle cx="7.500" cy="4.500" r="3.700" /><path d="M4.800 7.200L1 11" strokeWidth="1.500" /></svg>
            </FootSlot>
            <FootSlot><svg width="10" height="10" viewBox="0 0 10 10"><rect x="1" y="1" width="6" height="6" fill="#999" /><rect x="3" y="3" width="6" height="6" fill="#555" stroke="#bbb" /></svg></FootSlot>
            <FootSlot><svg width="11" height="8" viewBox="0 0 11 8"><path d="M0 1h3M4 1h2v6h5V1H8" stroke="#ccc" fill="none" /></svg></FootSlot>
            <FootSlot><svg width="9" height="10" viewBox="0 0 9 10"><path d="M0 0h6l3 3v7H0z" fill="#ccc" /></svg></FootSlot>
            <FootSlot><Trash2 size={11} color="#ccc" /></FootSlot>
          </LayerFoot>
        </LayersPanel>
      </Dock>
    </Workspace>

    <TypeMenu />
    <Pointer>
      <svg width="12" height="16" viewBox="0 0 12 16">
        <circle cx="3" cy="4" r="3" fill="#e0506e" opacity=".85" />
        <path d="M2 3v10l2.300-2.300 1.700 3.800 1.500-.7-1.700-3.700H9z" fill="#111" stroke="#eee" strokeWidth=".5" />
      </svg>
    </Pointer>
  </Screen>
);

export default App;
